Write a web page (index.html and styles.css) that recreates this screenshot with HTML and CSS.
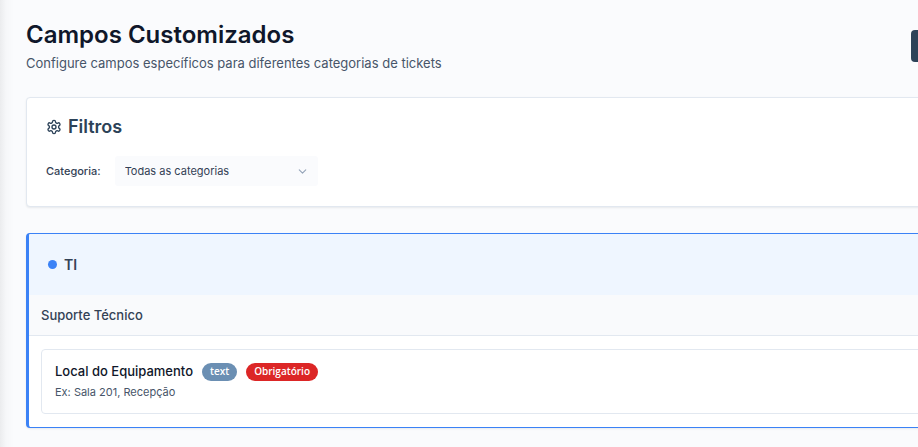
FILE: index.html
```html
<!DOCTYPE html>
<html lang="pt-BR">
<head>
<meta charset="utf-8">
<title>Campos Customizados</title>
<link rel="stylesheet" href="styles.css">
</head>
<body>
<main class="page">
  <header class="page-header">
    <div>
      <h1 class="page-title">Campos Customizados</h1>
      <p class="page-subtitle">Configure campos específicos para diferentes categorias de tickets</p>
    </div>
    <button class="primary-button" type="button" aria-label="Novo campo"></button>
  </header>

  <section class="card filters">
    <h2 class="filters-title">
      <svg class="gear" viewBox="0 0 24 24" fill="none" stroke="currentColor" stroke-width="2" stroke-linecap="round" stroke-linejoin="round" aria-hidden="true"><path d="M12.22 2h-.44a2 2 0 0 0-2 2v.18a2 2 0 0 1-1 1.73l-.43.25a2 2 0 0 1-2 0l-.15-.08a2 2 0 0 0-2.73.73l-.22.38a2 2 0 0 0 .73 2.73l.15.1a2 2 0 0 1 1 1.72v.51a2 2 0 0 1-1 1.74l-.15.09a2 2 0 0 0-.73 2.73l.22.38a2 2 0 0 0 2.73.73l.15-.08a2 2 0 0 1 2 0l.43.25a2 2 0 0 1 1 1.73V20a2 2 0 0 0 2 2h.44a2 2 0 0 0 2-2v-.18a2 2 0 0 1 1-1.73l.43-.25a2 2 0 0 1 2 0l.15.08a2 2 0 0 0 2.73-.73l.22-.39a2 2 0 0 0-.73-2.73l-.15-.08a2 2 0 0 1-1-1.74v-.5a2 2 0 0 1 1-1.74l.15-.09a2 2 0 0 0 .73-2.73l-.22-.38a2 2 0 0 0-2.73-.73l-.15.08a2 2 0 0 1-2 0l-.43-.25a2 2 0 0 1-1-1.73V4a2 2 0 0 0-2-2z"/><circle cx="12" cy="12" r="3"/></svg>
      Filtros
    </h2>
    <div class="filter-row">
      <label class="filter-label" for="category">Categoria:</label>
      <div class="select-box">
        <select class="select" id="category">
          <option>Todas as categorias</option>
          <option>TI</option>
        </select>
        <svg class="chevron" viewBox="0 0 24 24" fill="none" stroke="currentColor" stroke-width="2" stroke-linecap="round" stroke-linejoin="round" aria-hidden="true"><path d="m6 9 6 6 6-6"/></svg>
      </div>
    </div>
  </section>

  <section class="card category">
    <h2 class="category-header"><span class="dot"></span>TI</h2>
    <h3 class="group-title">Suporte Técnico</h3>
    <div class="group-body">
      <article class="field">
        <div class="field-heading">
          <h4 class="field-name">Local do Equipamento</h4>
          <span class="badge">text</span>
          <span class="badge badge-required">Obrigatório</span>
        </div>
        <p class="field-hint">Ex: Sala 201, Recepção</p>
      </article>
    </div>
  </section>
</main>
</body>
</html>
```
FILE: styles.css
```css
* {
  box-sizing: border-box;
}

body {
  margin: 0;
  background: #fafbfd;
  color: #334155;
  font-family: Inter, "Liberation Sans", sans-serif;
}

h1, h2, h3, h4, p {
  margin: 0;
}

.page {
  min-height: 100vh;
  padding: 19px 0 19px 26px;
  overflow: hidden;
  background: linear-gradient(to right, #ebecee, #f6f7f9 6px, #fafbfd 14px);
}

.page-header {
  display: flex;
  align-items: center;
  justify-content: space-between;
  margin-bottom: 25px;
}

.page-title {
  color: #0f172a;
  font-size: 24px;
  font-weight: 600;
  line-height: 32px;
}

.page-subtitle {
  margin-top: 3px;
  color: #475569;
  font-size: 13px;
  line-height: 18px;
}

.primary-button {
  width: 120px;
  height: 32px;
  margin-right: -113px;
  border: 0;
  border-radius: 4px;
  background: #2c4258;
}

/* Cards run on past the right edge of the viewport. */
.card {
  margin-right: -24px;
  border: 1px solid #e2e8f0;
  border-radius: 4px;
  background: #fff;
  box-shadow: 0 1px 2px rgba(15, 23, 42, 0.08);
}

.filters {
  margin-bottom: 26px;
  padding: 16px 19px 20px;
}

.filters-title {
  display: flex;
  align-items: center;
  gap: 6px;
  margin-bottom: 16px;
  color: #2c4258;
  font-size: 18px;
  font-weight: 600;
  line-height: 26px;
}

.gear {
  width: 16px;
  height: 16px;
}

.filter-row {
  display: flex;
  align-items: center;
  gap: 14px;
}

.filter-label {
  font-size: 11px;
  font-weight: 500;
}

.select-box {
  position: relative;
  width: 203px;
}

.select {
  width: 100%;
  height: 30px;
  padding: 0 10px;
  border: 0;
  border-radius: 3px;
  appearance: none;
  background: #fafbfd;
  color: #334155;
  font: 400 11px Inter, "Liberation Sans", sans-serif;
}

.chevron {
  position: absolute;
  top: 9px;
  right: 9px;
  width: 13px;
  height: 13px;
  color: #94a3b8;
  pointer-events: none;
}

.category {
  overflow: hidden;
  border-color: #3b82f6;
  border-left-width: 3px;
}

.category-header {
  display: flex;
  align-items: center;
  gap: 7px;
  height: 61px;
  padding: 0 19px;
  background: #eff6ff;
  font-size: 14px;
  font-weight: 600;
}

.dot {
  width: 9px;
  height: 9px;
  border-radius: 50%;
  background: #3b82f6;
}

.group-title {
  padding: 10px 12px;
  border-bottom: 1px solid #e2e8f0;
  background: #f9fafc;
  font-size: 13px;
  font-weight: 500;
  line-height: 20px;
}

.group-body {
  padding: 13px 12px;
}

.field {
  padding: 13px;
  border: 1px solid #e2e8f0;
  border-radius: 4px;
}

.field-heading {
  display: flex;
  align-items: flex-start;
  gap: 9px;
}

.field-name {
  color: #0f172a;
  font-size: 13px;
  font-weight: 500;
  line-height: 16px;
}

.badge {
  padding: 0 8px 2px;
  border-radius: 9px;
  background: #6b8fb3;
  color: #fff;
  font-family: "Open Sans", sans-serif;
  font-size: 10px;
  font-weight: 600;
  line-height: 16px;
}

.badge-required {
  background: #dc2626;
}

.field-hint {
  margin-top: 3px;
  color: #475569;
  font-size: 11px;
  line-height: 16px;
}
```
